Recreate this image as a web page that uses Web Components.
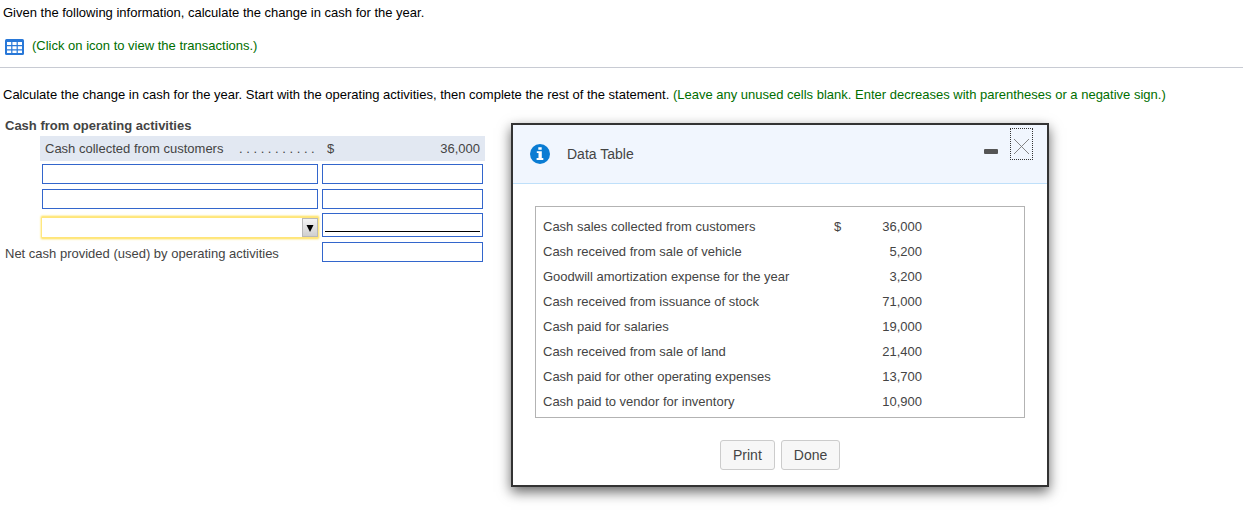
<!DOCTYPE html>
<html lang="en">
<head>
<meta charset="utf-8">
<title>Change in cash</title>
<style>
body {
  margin: 0;
  height: 529px;
  overflow: hidden;
  background-color: white;
  color: #000;
  font: 13px/15px "Liberation Sans", Arial, sans-serif;
}
</style>
</head>
<body>
<exercise-page></exercise-page>

<script>
/**
 * Creates a template from a string of markup.
 */
const createTemplate = (html) => {
  const template = document.createElement('template')
  template.innerHTML = html
  return template
}

const gridIconTemplate = createTemplate(`
<style>
:host {
  display: block;
  width: 19px;
  height: 16px;
}

svg {
  display: block;
}
</style>
<svg width="19" height="16" viewBox="0 0 19 16">
  <rect width="19" height="16" rx="1.5" fill="#2878d8"/>
  <path fill="#fff" d="M2 3h4.2v3H2zM7.4 3h4.2v3H7.4zM12.8 3H17v3h-4.2zM2 7.2h4.2v3H2zM7.4 7.2h4.2v3H7.4zM12.8 7.2H17v3h-4.2zM2 11.4h4.2V14H2zM7.4 11.4h4.2V14H7.4zM12.8 11.4H17V14h-4.2z"/>
</svg>
`)
customElements.define('grid-icon',
  class extends HTMLElement {
    constructor () {
      super()
      this.attachShadow({ mode: 'open' })
        .appendChild(gridIconTemplate.content.cloneNode(true))
    }
  })

const answerBoxTemplate = createTemplate(`
<style>
:host {
  display: block;
  box-sizing: border-box;
  height: 20px;
  border: 1px solid #36c;
  background-color: white;
}

:host([total]) {
  height: 24px;
  padding: 17px 2px 0;
}

:host([total]) .rule {
  height: 1px;
  background-color: #000;
}
</style>
<div class="rule"></div>
`)
customElements.define('answer-box',
  /**
   * An empty cell, with the attribute total it has a sum line.
   */
  class extends HTMLElement {
    constructor () {
      super()
      this.attachShadow({ mode: 'open' })
        .appendChild(answerBoxTemplate.content.cloneNode(true))
    }
  })

const answerSelectTemplate = createTemplate(`
<style>
:host {
  display: flex;
  justify-content: flex-end;
  box-sizing: border-box;
  height: 21px;
  border: 1px solid #ffe57a;
  border-width: 1px 0 1px 0;
  box-shadow: 0 0 2px 1px #ffdd45;
  background-color: white;
}

.arrow {
  display: flex;
  align-items: center;
  justify-content: center;
  box-sizing: border-box;
  width: 16px;
  height: 19px;
  border: 1px solid #b8b8b8;
  background: linear-gradient(#f4f4f4, #cfcfcf);
}

svg {
  display: block;
  margin-top: 2px;
}
</style>
<div class="arrow">
  <svg width="8" height="7" viewBox="0 0 8 7"><path d="M.5 0h7L4 7z"/></svg>
</div>
`)
customElements.define('answer-select',
  class extends HTMLElement {
    constructor () {
      super()
      this.attachShadow({ mode: 'open' })
        .appendChild(answerSelectTemplate.content.cloneNode(true))
    }
  })

const cashStatementTemplate = createTemplate(`
<style>
:host {
  display: block;
  width: 485px;
  color: #444;
}

h2 {
  margin: 0 0 3px;
  padding-left: 5px;
  font-size: 13px;
  line-height: 15px;
}

.given {
  display: flex;
  align-items: center;
  box-sizing: border-box;
  height: 25px;
  margin-left: 40px;
  padding: 0 5px;
  background-color: #e2e8f2;
}

.given .label {
  width: 194px;
}

.given .dots {
  width: 88px;
  letter-spacing: 3.6px;
}

.given .amount {
  margin-left: auto;
}

.row {
  display: grid;
  grid-template-columns: 276px 161px;
  column-gap: 4px;
  margin: 0 0 5px 42px;
}

.row.first {
  margin-top: 3px;
}

.row.last {
  margin-top: -1px;
}

answer-select {
  margin-top: 4px;
}

.net {
  display: grid;
  grid-template-columns: 317px 161px;
  padding-left: 5px;
}

.net span {
  padding-top: 4px;
}
</style>
<h2>Cash from operating activities</h2>
<div class="given">
  <span class="label">Cash collected from customers</span>
  <span class="dots">...........</span>
  <span>$</span>
  <span class="amount">36,000</span>
</div>
<div class="row first"><answer-box></answer-box><answer-box></answer-box></div>
<div class="row"><answer-box></answer-box><answer-box></answer-box></div>
<div class="row last"><answer-select></answer-select><answer-box total></answer-box></div>
<div class="net"><span>Net cash provided (used) by operating activities</span><answer-box></answer-box></div>
`)
customElements.define('cash-statement',
  class extends HTMLElement {
    constructor () {
      super()
      this.attachShadow({ mode: 'open' })
        .appendChild(cashStatementTemplate.content.cloneNode(true))
      // the select sits lower than the boxes, so its row must not grow with it
      this.shadowRoot.querySelector('.row.last').style.height = '24px'
    }
  })

const dataTableTemplate = createTemplate(`
<style>
:host {
  display: block;
  box-sizing: border-box;
  width: 490px;
  height: 212px;
  border: 1px solid #b3b3b3;
  padding: 7px;
}

.row {
  display: grid;
  grid-template-columns: 291px 20px 68px;
  line-height: 25px;
}

.row span:last-child {
  text-align: right;
}
</style>
`)
customElements.define('data-table',
  /**
   * Lists the transactions and their amounts.
   */
  class extends HTMLElement {
    constructor () {
      super()
      this.attachShadow({ mode: 'open' })
        .appendChild(dataTableTemplate.content.cloneNode(true))
      this.rows = [
        ['Cash sales collected from customers', '$', '36,000'],
        ['Cash received from sale of vehicle', '', '5,200'],
        ['Goodwill amortization expense for the year', '', '3,200'],
        ['Cash received from issuance of stock', '', '71,000'],
        ['Cash paid for salaries', '', '19,000'],
        ['Cash received from sale of land', '', '21,400'],
        ['Cash paid for other operating expenses', '', '13,700'],
        ['Cash paid to vendor for inventory', '', '10,900']
      ]
      for (const cells of this.rows) {
        const row = document.createElement('div')
        row.className = 'row'
        for (const cell of cells) {
          const span = document.createElement('span')
          span.textContent = cell
          row.appendChild(span)
        }
        this.shadowRoot.appendChild(row)
      }
    }
  })

const dialogButtonTemplate = createTemplate(`
<style>
:host {
  display: block;
}

button {
  display: block;
  box-sizing: border-box;
  height: 30px;
  padding: 0 12px;
  border: 1px solid #ccc;
  border-radius: 3px;
  background-color: #f7f7f7;
  color: #444;
  font: inherit;
  font-size: 14px;
}
</style>
<button><slot></slot></button>
`)
customElements.define('dialog-button',
  class extends HTMLElement {
    constructor () {
      super()
      this.attachShadow({ mode: 'open' })
        .appendChild(dialogButtonTemplate.content.cloneNode(true))
    }
  })

const dialogWindowTemplate = createTemplate(`
<style>
:host {
  display: block;
  box-sizing: border-box;
  width: 538px;
  height: 364px;
  border: 2px solid #333;
  box-shadow: 0 5px 12px rgba(0, 0, 0, 0.6);
  background-color: white;
  color: #444;
}

header {
  display: flex;
  align-items: flex-start;
  box-sizing: border-box;
  height: 59px;
  padding: 3px 14px 0 17px;
  border-bottom: 1px solid #bfe0fa;
  background-color: #f1f6fe;
}

.info {
  margin-top: 16px;
}

.title {
  margin: 18px auto 0 17px;
  font-size: 14px;
  line-height: 16px;
}

.minimize {
  width: 14px;
  height: 5px;
  margin: 21px 12px 0 0;
  border-radius: 1px;
  background-color: #555;
}

.close {
  display: flex;
  justify-content: center;
  box-sizing: border-box;
  width: 23px;
  height: 32px;
  padding-top: 10px;
  border: 1px dotted #333;
}

.body {
  padding: 22px 0 0 22px;
}

footer {
  display: flex;
  gap: 6px;
  padding: 22px 0 0 207px;
}

svg {
  display: block;
}
</style>
<header>
  <svg class="info" width="20" height="20" viewBox="0 0 20 20">
    <circle cx="10" cy="10" r="10" fill="#0a7cd3"/>
    <path fill="#fff" d="M8.3 3.2h3.4v2.6H8.3zM6.8 7.2h5v6.9h1.5V16H6.6v-1.9h1.9V9.1H6.8z"/>
  </svg>
  <span class="title"><slot name="title"></slot></span>
  <span class="minimize"></span>
  <span class="close">
    <svg width="15" height="15" viewBox="0 0 15 15"><path d="M0 0L15 15M15 0L0 15" stroke="#777" stroke-width="0.9"/></svg>
  </span>
</header>
<div class="body"><slot></slot></div>
<footer><slot name="actions"></slot></footer>
`)
customElements.define('dialog-window',
  class extends HTMLElement {
    constructor () {
      super()
      this.attachShadow({ mode: 'open' })
        .appendChild(dialogWindowTemplate.content.cloneNode(true))
    }
  })

const pageTemplate = createTemplate(`
<style>
:host {
  display: block;
}

p {
  margin: 0;
  padding-left: 3px;
  white-space: nowrap;
}

.intro {
  padding-top: 5px;
}

.hint {
  color: #006e00;
}

.transactions {
  display: flex;
  gap: 8px;
  height: 29px;
  padding: 18px 0 0 5px;
}

.transactions grid-icon {
  margin-top: 1px;
}

.question {
  padding-top: 19px;
  border-top: 1px solid #c8cbd3;
}

cash-statement {
  margin-top: 16px;
}

dialog-window {
  position: absolute;
  left: 511px;
  top: 123px;
}
</style>
<p class="intro">Given the following information, calculate the change in cash for the year.</p>
<div class="transactions">
  <grid-icon></grid-icon>
  <span class="hint">(Click on icon to view the transactions.)</span>
</div>
<p class="question">Calculate the change in cash for the year. Start with the operating activities, then complete the rest of the statement. <span class="hint">(Leave any unused cells blank. Enter decreases with parentheses or a negative sign.)</span></p>
<cash-statement></cash-statement>
<dialog-window>
  <span slot="title">Data Table</span>
  <data-table></data-table>
  <dialog-button slot="actions">Print</dialog-button>
  <dialog-button slot="actions">Done</dialog-button>
</dialog-window>
`)
customElements.define('exercise-page',
  /**
   * The exercise with the statement and the transactions dialog.
   */
  class extends HTMLElement {
    constructor () {
      super()
      this.attachShadow({ mode: 'open' })
        .appendChild(pageTemplate.content.cloneNode(true))
    }
  })
</script>
</body>
</html>
